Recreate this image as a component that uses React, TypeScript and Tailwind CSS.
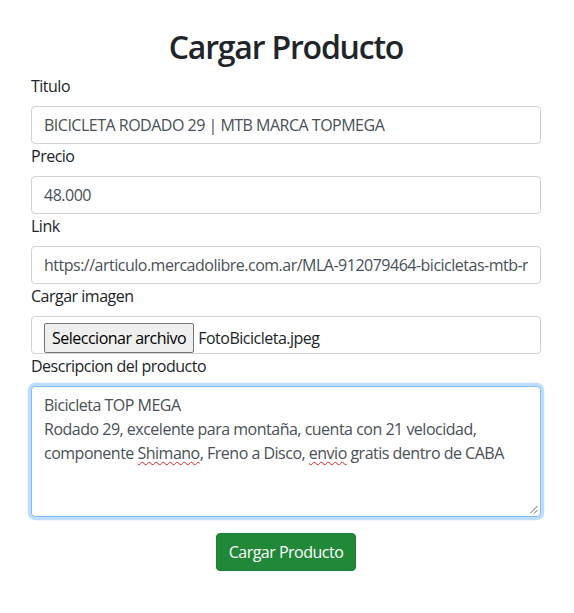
import React from "react";

const font = "font-['Segoe_UI','Open_Sans',sans-serif]";

function Label({ children }: { children: React.ReactNode }) {
  return <label className="block text-base leading-6 mb-2 text-[#212529]">{children}</label>;
}

function Field({ children }: { children: React.ReactNode }) {
  return (
    <div className="h-[38px] border border-[#ced4da] rounded bg-white px-3 py-1.5 text-base leading-6 text-[#495057]">
      <div className="overflow-hidden whitespace-nowrap">{children}</div>
    </div>
  );
}

function Squiggle({ children }: { children: React.ReactNode }) {
  return <span className="underline decoration-wavy decoration-[#e02020] decoration-1 underline-offset-[2px]">{children}</span>;
}

export default function App() {
  return (
    <div className={`bg-white min-h-[613px] ${font} text-[#212529] tracking-[-0.5px]`}>
      <div className="pl-[31px] pr-[33px] pt-[28px]">
        <h2 className="text-[32px] font-semibold leading-[1.2] text-center mb-2 text-[#212529] tracking-[-1.2px]">Cargar Producto</h2>

        <Label>Titulo</Label>
        <Field>BICICLETA RODADO 29 | MTB MARCA TOPMEGA</Field>

        <Label>Precio</Label>
        <Field>48.000</Field>

        <Label>Link</Label>
        <Field>https://articulo.mercadolibre.com.ar/MLA-912079464-bicicletas-mtb-rodado-29-shimano</Field>

        <Label>Cargar imagen</Label>
        <div className="h-[38px] border border-[#ced4da] rounded bg-white pl-3 pt-[6px] flex items-start text-base text-[#495057]">
          <div className="h-[30px] px-[7px] flex items-center border border-[#767676] rounded-[2px] bg-[#efefef] text-[#000000] leading-6">
            Seleccionar archivo
          </div>
          <span className="ml-1 leading-[30px] text-[#212529]">FotoBicicleta.jpeg</span>
        </div>

        <Label>Descripcion del producto</Label>
        <div className="relative h-[131px] border border-[#80bdff] rounded bg-white px-3 py-1.5 text-base leading-6 text-[#495057] shadow-[0_0_0_0.2rem_rgba(0,123,255,0.25)]">
          <div>Bicicleta TOP MEGA</div>
          <div>Rodado 29, excelente para montaña, cuenta con 21 velocidad,</div>
          <div className="whitespace-nowrap">
            componente <Squiggle>Shimano</Squiggle>, Freno a Disco, <Squiggle>envio</Squiggle> gratis dentro de CABA
          </div>
          <svg className="absolute right-[2px] bottom-[2px]" width="9" height="9" viewBox="0 0 9 9">
            <line x1="1" y1="8.5" x2="8.5" y2="1" stroke="#666" strokeWidth="1" />
            <line x1="5" y1="8.5" x2="8.5" y2="5" stroke="#666" strokeWidth="1" />
          </svg>
        </div>

        <div className="flex justify-center mt-4">
          <button className="h-[38px] px-3 rounded border border-[#1e7e34] bg-[#218838] text-white text-base leading-6">
            Cargar Producto
          </button>
        </div>
      </div>
    </div>
  );
}
